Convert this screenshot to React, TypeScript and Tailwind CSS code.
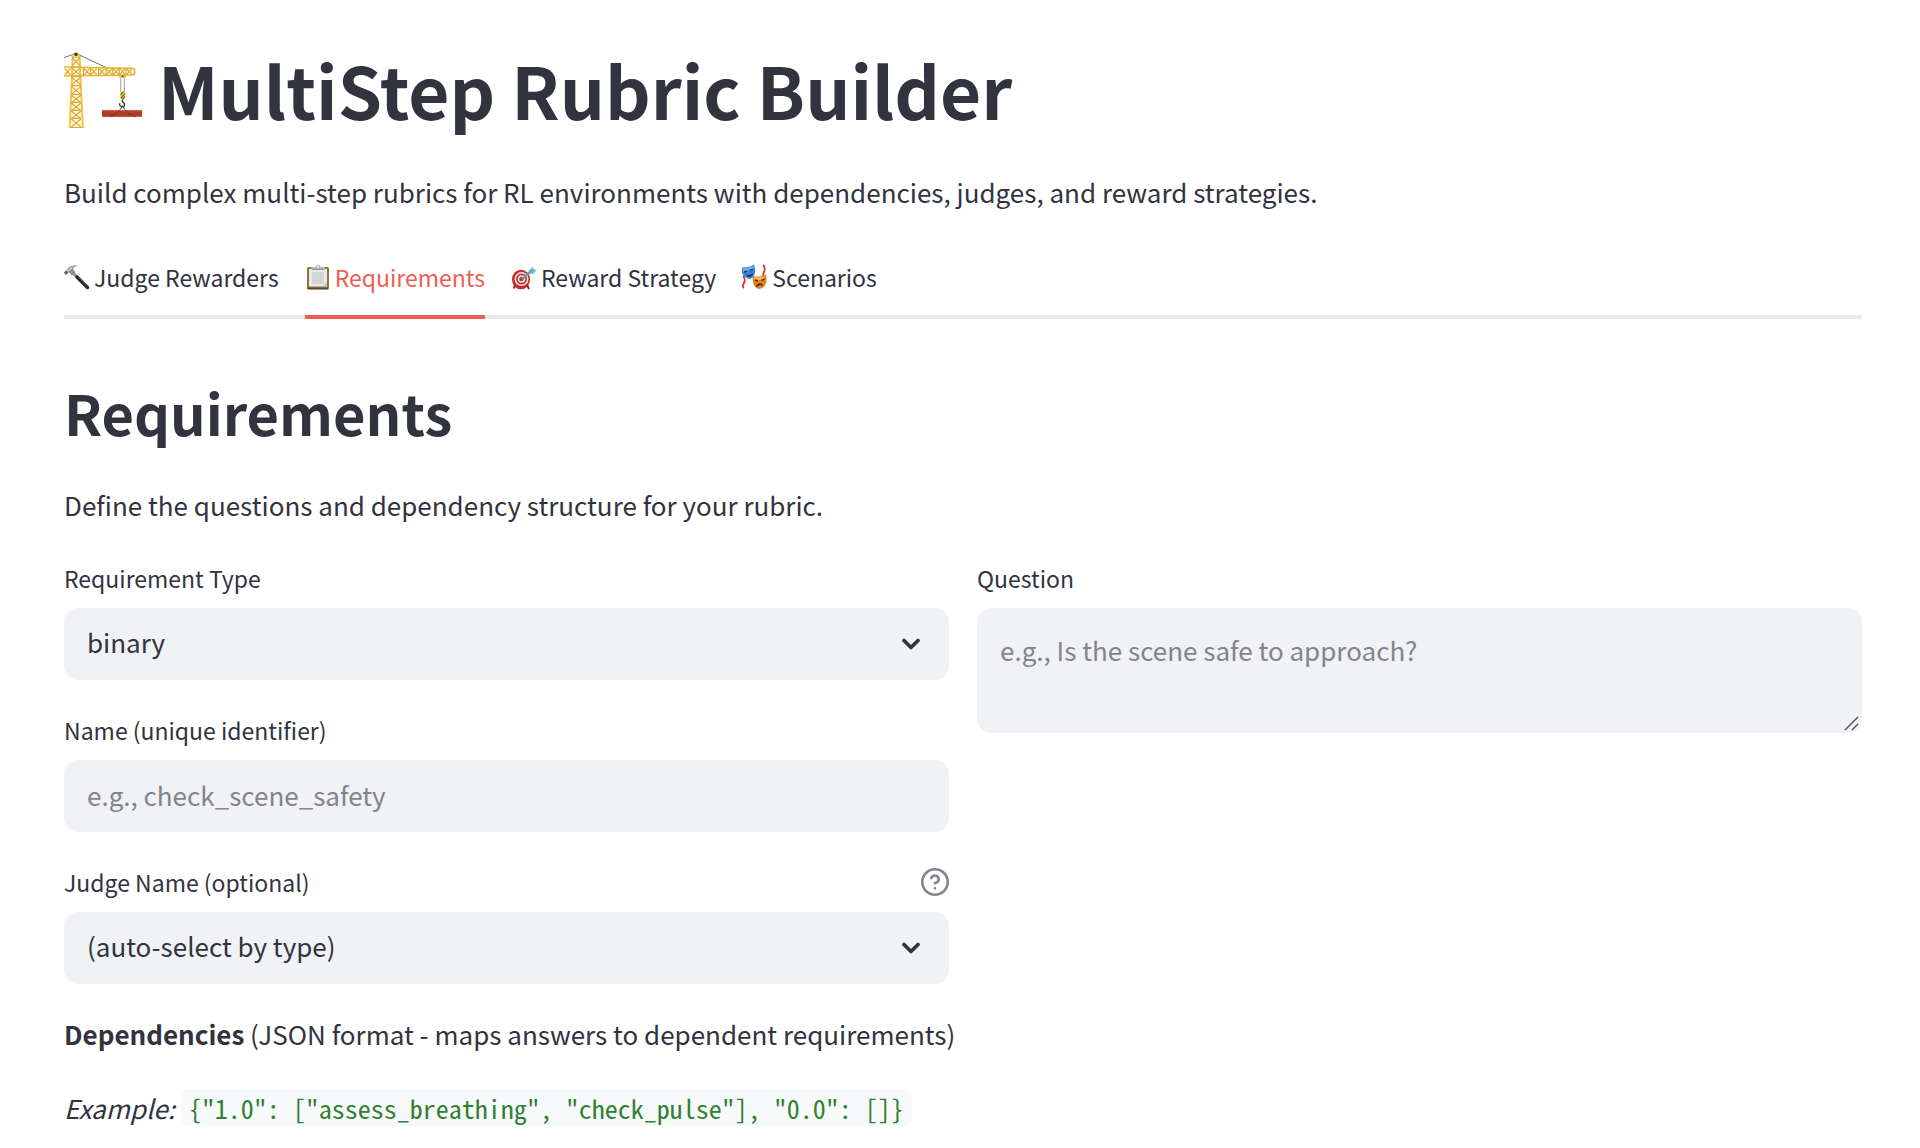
import { useId, useState, type ReactNode } from "react";

function CraneIcon() {
  const mast = [54, 82, 110, 136, 160, 184, 208];
  const beam = [92, 116, 138, 158, 178, 198];
  return (
    <svg aria-hidden="true" viewBox="12 9 234 228" className="h-[76px] w-[78px] shrink-0" fill="none">
      <path d="M12 26 46 14 M50 14 190 80" stroke="#55585c" strokeWidth="2.5" />
      <path d="M38 24h21l2 60 8 153H29l7-153z" fill="#fff8e0" />
      <path d="M12 53 218 58q7 0 7 6v9q0 6-7 6L12 82z" fill="#fff8e0" />
      <path d="M12 54 218 58q6 0 6 6v9q0 5-6 5L12 81" stroke="#e9b93c" strokeWidth="5" />
      <path d="M38 20 36 84 29 237 M59 20l2 64 8 153" stroke="#f0c54b" strokeWidth="6" />
      {mast.map((y) => (
        <path key={y} d={`M34 ${y}h29M34 ${y + 2}l29 24M63 ${y + 2}l-29 24`} stroke="#dda835" strokeWidth="3.5" />
      ))}
      <path d="M31 236h37M36 26l24 24M60 26 36 50M36 24h24" stroke="#dda835" strokeWidth="3.5" />
      <path d="M14 58l18 20M32 58 14 78M70 56v26M72 58l18 20M90 58 72 78" stroke="#dda835" strokeWidth="3.5" />
      {beam.map((x) => (
        <path key={x} d={`M${x} 57v24M${x + 2} 59l16 18M${x + 18} 59l-16 18`} stroke="#dda835" strokeWidth="3.5" />
      ))}
      <path d="M38 22q0-12 10-12t10 12z" fill="#f0cc3c" />
      <circle cx="48" cy="16" r="5" fill="#30343a" />
      <path d="M176 79h23l-3 8h-17z" fill="#eebf2f" />
      <circle cx="188" cy="82" r="3" fill="#5b5130" />
      <path d="M182 88v40M193 88v40" stroke="#9da1a6" strokeWidth="3" />
      <rect x="181" y="127" width="14" height="25" rx="5" fill="#e8c02e" />
      <path d="M182 137l8-9M183 147l11-13M187 151l8-9" stroke="#3c3a2c" strokeWidth="3" />
      <path d="M187 152v6q9 5 6 12t-12 1q-4-4-1-9" stroke="#3d4146" strokeWidth="4" />
      <rect x="126" y="183" width="120" height="21" fill="#b83b22" />
      <path d="M126 185h120M126 201h120" stroke="#d4593a" strokeWidth="4" />
      <path d="M126 198h120" stroke="#8f2a18" strokeWidth="2" />
      <path d="M187 170q-10 24-38 34M187 170q12 24 40 34" stroke="#4a4648" strokeWidth="3" />
    </svg>
  );
}

function HammerIcon() {
  return (
    <svg aria-hidden="true" viewBox="0 0 26 26" className="size-[26px] shrink-0" fill="none">
      <path d="M9 9l5 5" stroke="#8d9196" strokeWidth="3" />
      <path d="M13 13l10.500 10.500" stroke="#25272b" strokeWidth="3.400" strokeLinecap="round" />
      <path d="M14 13l9 9" stroke="#5b5f66" strokeWidth="0.800" />
      <path d="M0 8.500 3 5.500Q7 0.500 13.500 1.500 10 2.500 9 5l2.500 3.500-3.500 3.200-3-3.200-1.500.5L2 11z" fill="#8c939d" />
      <path d="M1.500 8 4 6q3-4 8-4.300Q8 3 7 5.500L5 7z" fill="#ccd4de" />
      <path d="M0 8.500l2-2 2 2.500-2 2z" fill="#5f656e" />
    </svg>
  );
}

function ClipboardIcon() {
  return (
    <svg aria-hidden="true" viewBox="0 0 26 26" className="size-[26px] shrink-0">
      <rect x="2" y="3" width="22" height="22.500" rx="1.500" fill="#94713f" />
      <path d="M3 24.500h20" stroke="#604624" strokeWidth="1.500" />
      <path d="M4 5h18v17.500H4z" fill="#e9e9ea" />
      <path d="M7 8h12v12H7z" fill="#d3d4d6" />
      <path d="M18 22.500 22 18v4.500z" fill="#c2c3c5" />
      <path d="M6 5.500V4q0-1 2-1h2.500q0-2 2.500-2t2.500 2H18q2 0 2 1v1.500z" fill="#b6babf" />
      <path d="M7 5.500h12" stroke="#888d92" />
      <circle cx="13" cy="2.800" r="0.900" fill="#fff" />
    </svg>
  );
}

function TargetIcon() {
  return (
    <svg aria-hidden="true" viewBox="0 0 26 26" className="size-[26px] shrink-0" fill="none">
      <path d="M4 20l-1 4.500M16 21l2 4" stroke="#8f2420" strokeWidth="2" />
      <ellipse cx="10" cy="15.500" rx="9" ry="9.800" fill="#c42a2b" />
      <circle cx="10.500" cy="15" r="7" fill="#f3e4e2" />
      <circle cx="10.500" cy="15" r="5.500" fill="#c93431" />
      <circle cx="10.500" cy="15" r="3.800" fill="#f3e4e2" />
      <circle cx="10.500" cy="15" r="2.300" fill="#c93431" />
      <path d="M11 15 20 7" stroke="#4fa9b6" strokeWidth="1.800" />
      <path d="M16 10l2-4 4-3.500 .5 3 3.500.5-4 4z" fill="#7cc9cf" />
      <path d="M16.500 10 23 5.500" stroke="#348996" />
    </svg>
  );
}

function MasksIcon() {
  return (
    <svg aria-hidden="true" viewBox="0 0 26 26" className="size-[26px] shrink-0" fill="none">
      <path d="M1 12q3 3 1 7t0 5M21 1q3 3 1 7t1 6" stroke="#cf3c31" strokeWidth="1.800" />
      <path d="M0 3.500Q7 4 12 0.500q2 6 .5 10T7.500 15Q2 14 0 9z" fill="#3888d2" />
      <path d="M1 4.500q5 0 10-2.500l.5 3Q6 6 1 8z" fill="#69b4ed" />
      <path d="M2 8l3-.8M8 6.500l3-1" stroke="#173e70" strokeWidth="1.500" />
      <path d="M4 11q4 .5 7-2-.5 4-3.500 4T4 11z" fill="#153b6c" />
      <path d="M11 12q6 1.500 13-1.500 1.500 6-.5 10T17 25q-4-.5-5.500-5T11 12z" fill="#dd842c" />
      <path d="M12.500 13q5 1 10-1v3q-4 2-10 1z" fill="#f3b552" />
      <path d="M13 16l3 1M19.500 16.500l3-1.500" stroke="#5a2d13" strokeWidth="1.500" />
      <path d="M14.500 22.500q3-4 6-1" stroke="#632d16" strokeWidth="1.800" />
    </svg>
  );
}

const tabs: { label: string; icon: ReactNode }[] = [
  { label: "Judge Rewarders", icon: <HammerIcon /> },
  { label: "Requirements", icon: <ClipboardIcon /> },
  { label: "Reward Strategy", icon: <TargetIcon /> },
  { label: "Scenarios", icon: <MasksIcon /> },
];

function FieldLabel({ id, text, help }: { id: string; text: string; help?: boolean }) {
  return (
    <div className="mb-3 flex h-9 items-center justify-between">
      <label htmlFor={id} className="text-[23px] leading-9">
        {text}
      </label>
      {help && (
        <button type="button" aria-label={`Help for ${text}`} className="text-[#84858c]">
          <svg viewBox="1 1 22 22" className="size-7" fill="none" stroke="currentColor" strokeWidth="2" strokeLinecap="round" strokeLinejoin="round">
            <circle cx="12" cy="12" r="10" />
            <path d="M9.090 9a3 3 0 0 1 5.830 1c0 2-3 3-3 3M12 17h.01" />
          </svg>
        </button>
      )}
    </div>
  );
}

function SelectField({ label, options, help }: { label: string; options: string[]; help?: boolean }) {
  const id = useId();
  return (
    <div>
      <FieldLabel id={id} text={label} help={help} />
      <div className="relative">
        <select id={id} className="block h-18 w-full appearance-none rounded-[14px] bg-[#f0f2f6] pr-18 pb-1 pl-[23px] text-[26px] outline-none">
          {options.map((option) => (
            <option key={option}>{option}</option>
          ))}
        </select>
        <svg aria-hidden="true" viewBox="0 0 20 12" className="pointer-events-none absolute top-[30px] right-7 h-3 w-5" fill="none" stroke="currentColor" strokeWidth="3.600" strokeLinecap="round" strokeLinejoin="round">
          <path d="M3 2.500l7 7 7-7" />
        </svg>
      </div>
    </div>
  );
}

export default function App() {
  const [active, setActive] = useState("Requirements");
  const nameId = useId();
  const questionId = useId();

  return (
    <main className="bg-white pt-[42px] pr-[58px] pb-4 pl-16 font-['Source_Sans_Pro','Noto_Sans_CJK_SC',sans-serif] text-[26px] leading-[46px] text-[#31333f]">
      <h1 className="flex items-center gap-4 text-[71px] leading-[95px] font-bold">
        <CraneIcon />
        MultiStep Rubric Builder
      </h1>
      <p className="mt-8">Build complex multi-step rubrics for RL environments with dependencies, judges, and reward strategies.</p>

      <div role="tablist" className="mt-6 flex gap-[26px] shadow-[inset_0_-4px_#e9e9eb]">
        {tabs.map(({ label, icon }) => (
          <button
            key={label}
            type="button"
            role="tab"
            aria-selected={active === label}
            onClick={() => setActive(label)}
            className="flex h-20 items-center gap-1 border-b-4 border-transparent text-[23px] leading-9 aria-selected:border-[#ee5d54] aria-selected:text-[#ee5d54]"
          >
            {icon}
            {label}
          </button>
        ))}
      </div>

      <section role="tabpanel">
        <h2 className="mt-[54px] text-[56px] leading-[78px] font-semibold">Requirements</h2>
        <p className="mt-[31px]">Define the questions and dependency structure for your rubric.</p>

        <div className="mt-8 grid grid-cols-2 items-start gap-7">
          <div className="flex flex-col gap-8">
            <SelectField label="Requirement Type" options={["binary"]} />
            <div>
              <FieldLabel id={nameId} text="Name (unique identifier)" />
              <input
                id={nameId}
                type="text"
                placeholder="e.g., check_scene_safety"
                className="block h-18 w-full rounded-[14px] bg-[#f0f2f6] px-[23px] pb-1 outline-none placeholder:text-[#83848c]"
              />
            </div>
            <SelectField label="Judge Name (optional)" options={["(auto-select by type)"]} help />
          </div>
          <div>
            <FieldLabel id={questionId} text="Question" />
            <div className="relative">
              <textarea
                id={questionId}
                placeholder="e.g., Is the scene safe to approach?"
                className="block h-[125px] w-full resize-none rounded-[14px] bg-[#f0f2f6] px-[23px] py-[19px] outline-none placeholder:text-[#83848c]"
              />
              <svg aria-hidden="true" viewBox="0 0 16 16" className="pointer-events-none absolute right-0.5 bottom-0.5 size-4" stroke="#55575c" strokeWidth="1.500">
                <path d="M1 15 14 2M8 15l6-6" />
              </svg>
            </div>
          </div>
        </div>

        <p className="mt-[27px]">
          <strong className="font-bold">Dependencies</strong> (JSON format - maps answers to dependent requirements)
        </p>
        <p className="mt-7">
          <em>Example:</em>{" "}
          <code className="rounded-lg bg-[#f8f9fb] px-2 font-['Noto_Sans_Mono_CJK_SC','Liberation_Mono',monospace] text-[26px] leading-9 text-[#2f8132]">
            {'{"1.0": ["assess_breathing", "check_pulse"], "0.0": []}'}
          </code>
        </p>
      </section>
    </main>
  );
}
